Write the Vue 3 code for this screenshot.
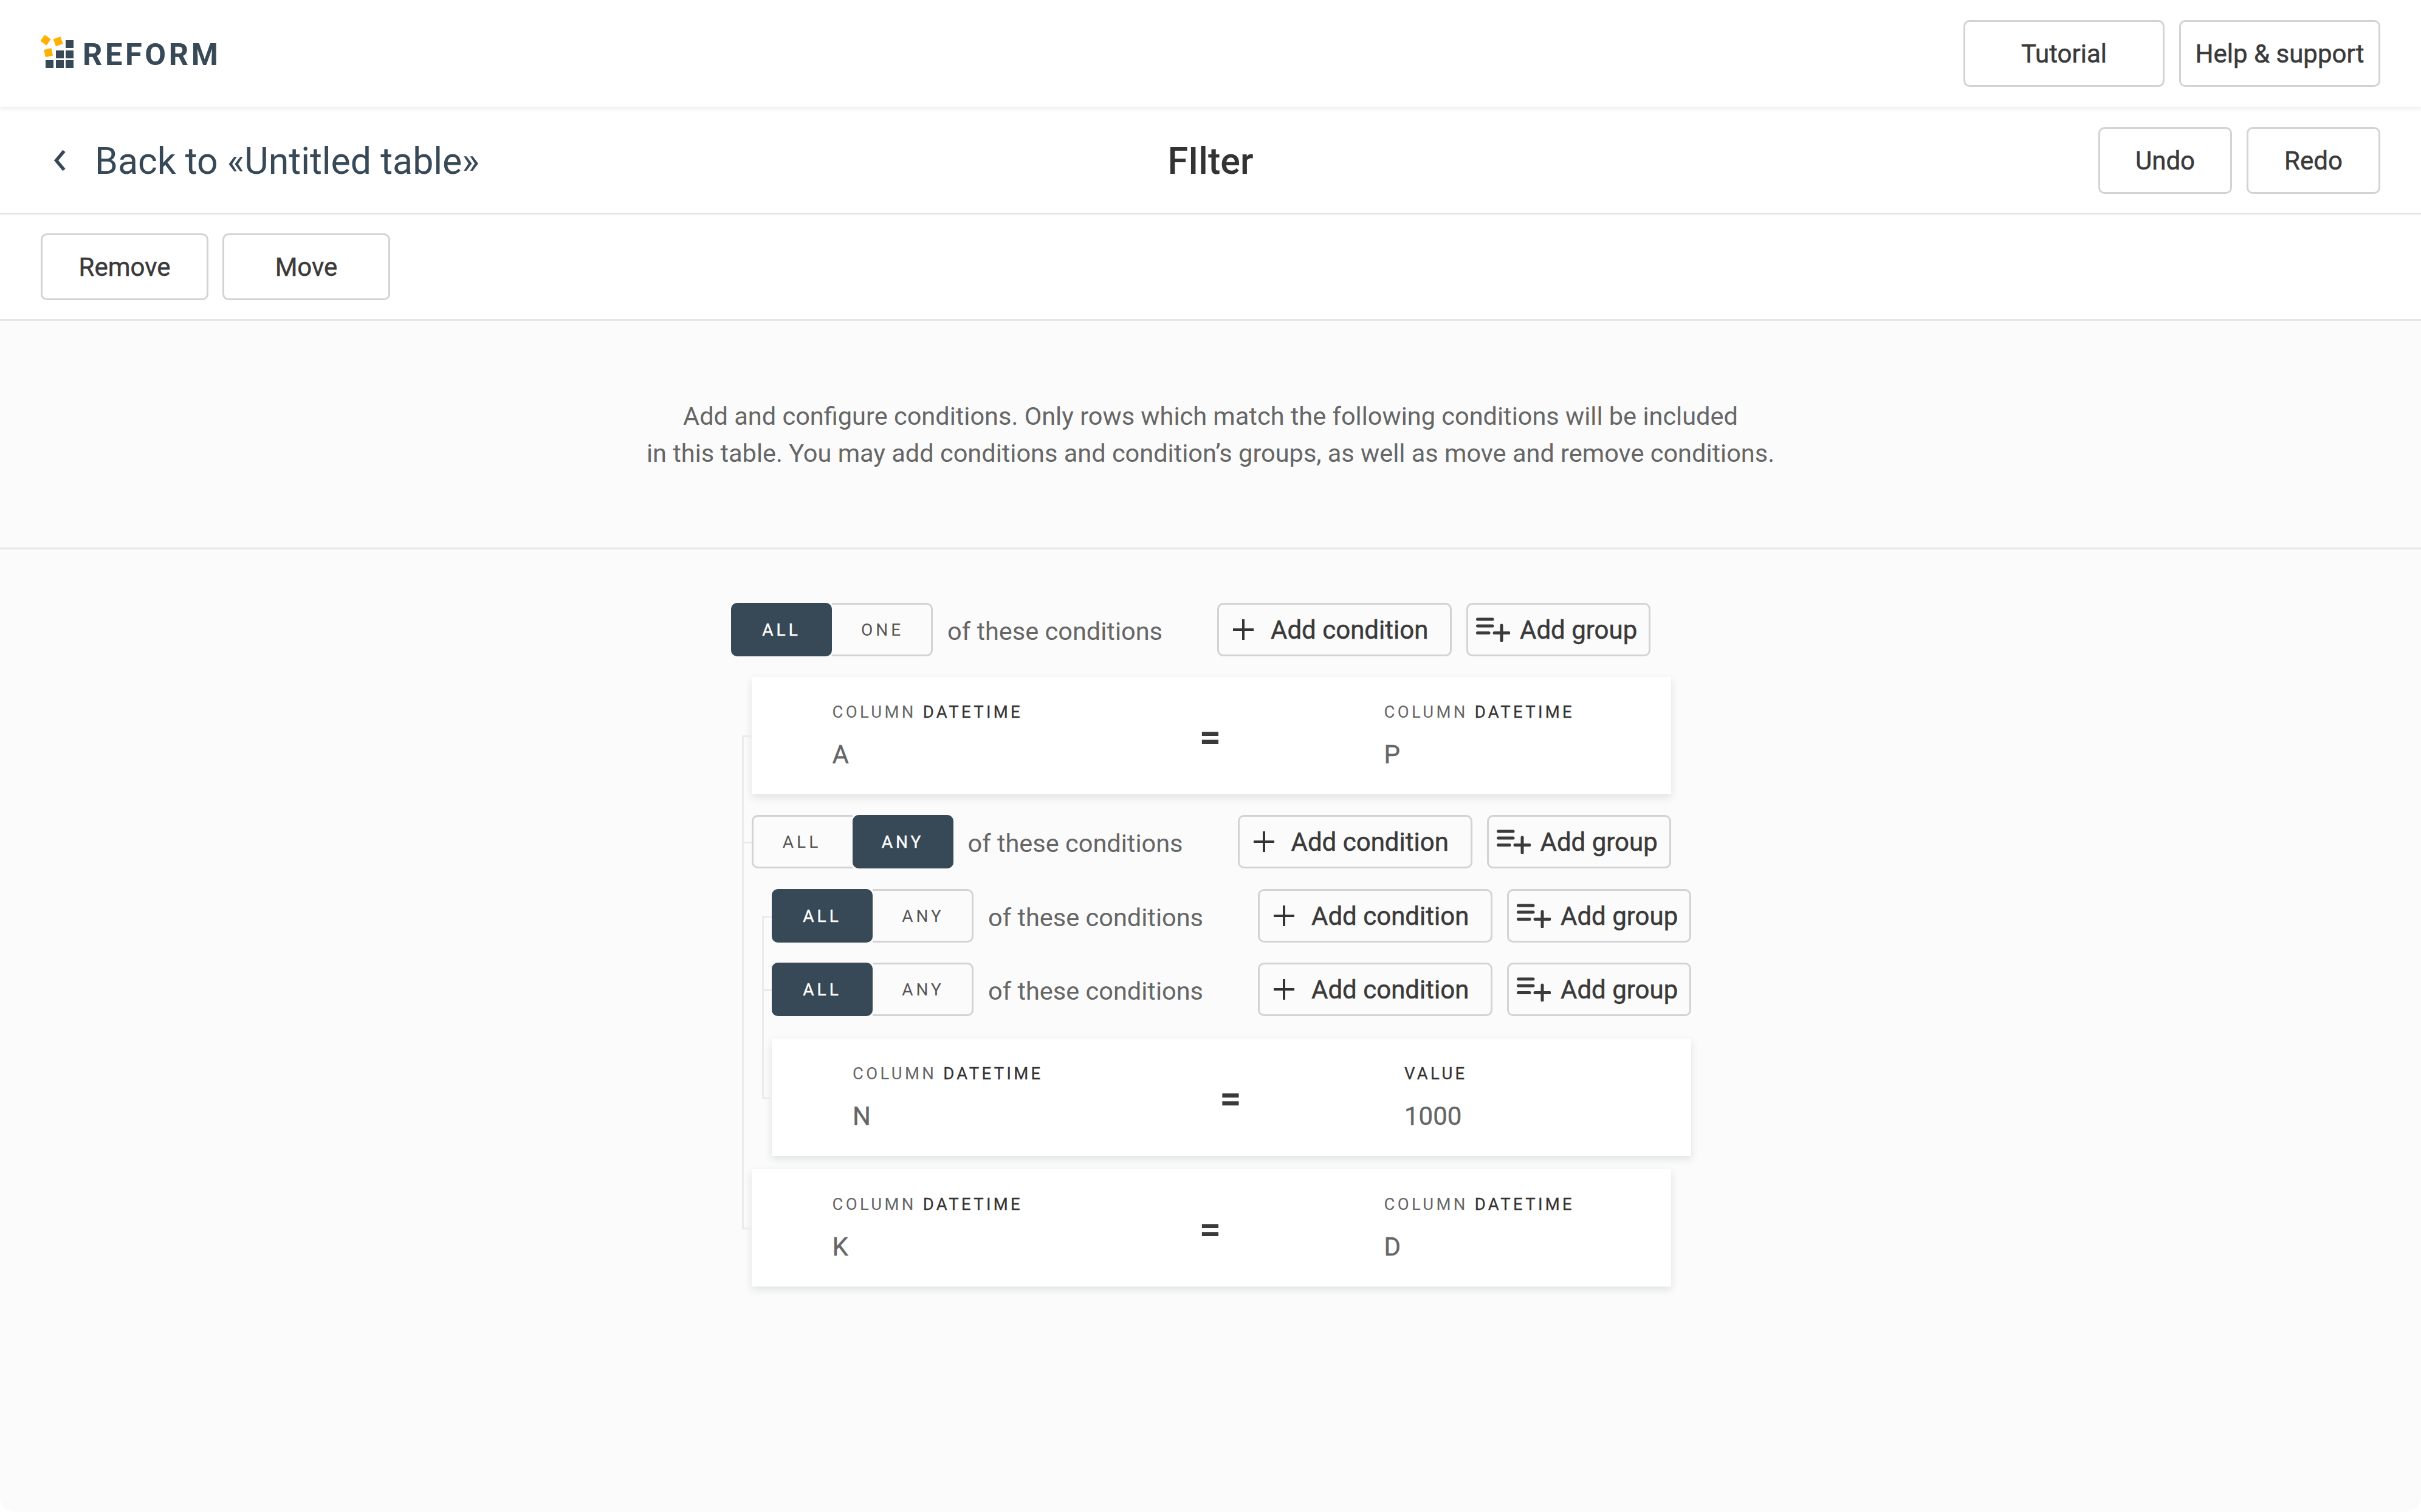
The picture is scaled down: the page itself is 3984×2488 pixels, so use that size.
<script setup>
const nestedRows = [0, 1]
</script>

<template>
  <div class="page">
    <header class="topbar">
      <div class="logo">
        <svg class="logo-mark" width="72" height="60" viewBox="0 0 72 60">
          <g fill="#ffb000">
            <rect x="1.75" y="1.75" width="12.5" height="12.5" transform="rotate(35 8 8)" />
            <rect x="22.45" y="4.05" width="12.5" height="12.5" transform="rotate(-20 28.7 10.3)" />
            <rect x="6.45" y="22.45" width="12.5" height="12.5" transform="rotate(-12 12.7 28.7)" />
          </g>
          <g fill="#374856">
            <rect x="41" y="8" width="13" height="13" />
            <rect x="25" y="25" width="13" height="13" />
            <rect x="41" y="25" width="13" height="13" />
            <rect x="8" y="41" width="13" height="13" />
            <rect x="25" y="41" width="13" height="13" />
            <rect x="41" y="41" width="13" height="13" />
          </g>
        </svg>
        <span class="logo-text">REFORM</span>
      </div>
      <div class="btn-row">
        <button class="btn w331">Tutorial</button>
        <button class="btn w331">Help &amp; support</button>
      </div>
    </header>

    <section class="titlebar">
      <div class="back">
        <svg class="chevron" width="20" height="34" viewBox="0 0 20 34">
          <path d="M17.5 1.5 L4.5 17 L17.5 32.5" fill="none" stroke="#374856" stroke-width="5.5" />
        </svg>
        <span>Back to «Untitled table»</span>
      </div>
      <h1 class="title">FIlter</h1>
      <div class="btn-row">
        <button class="btn w220">Undo</button>
        <button class="btn w220">Redo</button>
      </div>
    </section>

    <section class="toolbar">
      <button class="btn w276">Remove</button>
      <button class="btn w276">Move</button>
    </section>

    <section class="intro">
      <p>Add and configure conditions. Only rows which match the following conditions will be included</p>
      <p>in this table. You may add conditions and condition’s groups, as well as move and remove conditions.</p>
    </section>

    <main class="workspace">
      <div class="group root">
        <div class="head">
          <div class="toggle">
            <span class="opt on">ALL</span>
            <span class="opt">ONE</span>
          </div>
          <span class="of">of these conditions</span>
          <div class="actions">
            <button class="add cond">
              <svg width="34" height="34" viewBox="0 0 34 34"><path d="M17 0V34M0 17H34" stroke="#333" stroke-width="4" /></svg>
              Add condition
            </button>
            <button class="add grp">
              <svg width="56" height="40" viewBox="0 0 56 40"><path d="M2.5 3H27M2.5 14H27M2.5 25.5H21M30 25.5H54M42 13V38" stroke="#3a3a3a" stroke-width="5" stroke-linecap="round" fill="none" /></svg>
              Add group
            </button>
          </div>
        </div>

        <div class="children">
          <div class="card item">
            <div class="field"><div class="label">COLUMN <b>DATETIME</b></div><div class="value">A</div></div>
            <div class="eq">=</div>
            <div class="field far"><div class="label">COLUMN <b>DATETIME</b></div><div class="value">P</div></div>
          </div>

          <div class="group item">
            <div class="head">
              <div class="toggle">
                <span class="opt">ALL</span>
                <span class="opt on">ANY</span>
              </div>
              <span class="of">of these conditions</span>
              <div class="actions">
                <button class="add cond">
                  <svg width="34" height="34" viewBox="0 0 34 34"><path d="M17 0V34M0 17H34" stroke="#333" stroke-width="4" /></svg>
                  Add condition
                </button>
                <button class="add grp">
                  <svg width="56" height="40" viewBox="0 0 56 40"><path d="M2.5 3H27M2.5 14H27M2.5 25.5H21M30 25.5H54M42 13V38" stroke="#3a3a3a" stroke-width="5" stroke-linecap="round" fill="none" /></svg>
                  Add group
                </button>
              </div>
            </div>

            <div class="children nested">
              <div v-for="row in nestedRows" :key="row" class="group item">
                <div class="head">
                  <div class="toggle">
                    <span class="opt on">ALL</span>
                    <span class="opt">ANY</span>
                  </div>
                  <span class="of">of these conditions</span>
                  <div class="actions">
                    <button class="add cond">
                      <svg width="34" height="34" viewBox="0 0 34 34"><path d="M17 0V34M0 17H34" stroke="#333" stroke-width="4" /></svg>
                      Add condition
                    </button>
                    <button class="add grp">
                      <svg width="56" height="40" viewBox="0 0 56 40"><path d="M2.5 3H27M2.5 14H27M2.5 25.5H21M30 25.5H54M42 13V38" stroke="#3a3a3a" stroke-width="5" stroke-linecap="round" fill="none" /></svg>
                      Add group
                    </button>
                  </div>
                </div>
              </div>

              <div class="card item inner-card">
                <div class="field"><div class="label">COLUMN <b>DATETIME</b></div><div class="value">N</div></div>
                <div class="eq">=</div>
                <div class="field far"><div class="label"><b>VALUE</b></div><div class="value">1000</div></div>
              </div>
            </div>
          </div>

          <div class="card item last-card">
            <div class="field"><div class="label">COLUMN <b>DATETIME</b></div><div class="value">K</div></div>
            <div class="eq">=</div>
            <div class="field far"><div class="label">COLUMN <b>DATETIME</b></div><div class="value">D</div></div>
          </div>
        </div>
      </div>
    </main>
  </div>
</template>

<style>
html, body { margin: 0; background: #fff; }
</style>

<style scoped>
.page {
  width: 3984px;
  height: 2488px;
  overflow: hidden;
  display: flex;
  flex-direction: column;
  background: #fbfbfb;
  border-radius: 0 0 25px 25px;
  font-family: Roboto, "Liberation Sans", sans-serif;
  color: #333;
}
.topbar {
  position: relative;
  z-index: 2;
  flex: 0 0 176px;
  box-sizing: border-box;
  display: flex;
  align-items: center;
  justify-content: space-between;
  padding: 0 67px;
  background: #fff;
  box-shadow: 0 2px 7px rgba(55, 72, 86, 0.13);
}
.logo { display: flex; align-items: center; height: 60px; }
.logo-text {
  margin-left: -3px;
  padding-top: 3px;
  font-size: 50.5px;
  font-weight: 700;
  letter-spacing: 4.6px;
  color: #374856;
}
.btn-row { display: flex; gap: 24px; }
.btn {
  box-sizing: border-box;
  height: 110px;
  padding: 0;
  background: #fff;
  border: 3px solid #d3d3d5;
  border-radius: 10px;
  font: 400 42px Roboto, "Liberation Sans", sans-serif;
  -webkit-text-stroke: 0.5px #3a3a3a;
  color: #3a3a3a;
}
.w331 { width: 331px; }
.w220 { width: 220px; }
.w276 { width: 276px; }
.titlebar {
  flex: 0 0 177px;
  box-sizing: border-box;
  position: relative;
  display: flex;
  align-items: center;
  justify-content: space-between;
  padding: 2px 67px 0;
  background: #fff;
  border-bottom: 3px solid #e6e6e8;
}
.back {
  display: flex;
  align-items: center;
  font-size: 60.8px;
  color: #374856;
}
.back span { padding-top: 2px; }
.chevron { margin-left: 21px; margin-right: 48px; }
.title {
  position: absolute;
  left: 0;
  right: 0;
  margin: 0;
  padding-top: 2px;
  text-align: center;
  font-size: 61px;
  font-weight: 500;
  color: #333;
  pointer-events: none;
}
.toolbar {
  flex: 0 0 175px;
  box-sizing: border-box;
  display: flex;
  align-items: center;
  gap: 23px;
  padding: 0 67px;
  background: #fff;
  border-bottom: 3px solid #e6e6e8;
}
.intro {
  flex: 0 0 376px;
  box-sizing: border-box;
  display: flex;
  flex-direction: column;
  align-items: center;
  justify-content: center;
  border-bottom: 3px solid #e6e6e8;
  font-size: 41.5px;
  line-height: 61px;
  color: #666;
}
.intro p { margin: 0; }
.workspace { flex: 1; padding: 88px 0 0 1203px; }
.group { display: flex; flex-direction: column; gap: 34px; }
.head {
  width: 1513px;
  height: 88px;
  display: flex;
  align-items: center;
}
.toggle { flex: 0 0 332px; height: 88px; display: flex; }
.opt {
  flex: 1;
  box-sizing: border-box;
  display: flex;
  align-items: center;
  justify-content: center;
  border: 3px solid #d3d3d5;
  font-size: 28px;
  font-weight: 400;
  letter-spacing: 5px;
  color: #555;
}
.opt:first-child { border-right: 0; border-radius: 10px 0 0 10px; padding-right: 3px; }
.opt:last-child { border-left: 0; border-radius: 0 10px 10px 0; padding-left: 3px; }
.opt.on {
  background: #374856;
  border: 3px solid #374856;
  border-radius: 10px;
  padding: 0;
  color: #fff;
  -webkit-text-stroke: 0.4px #fff;
}
.of {
  margin-left: 24px;
  padding-top: 5px;
  font-size: 41.5px;
  color: #666;
}
.actions { margin-left: auto; display: flex; gap: 24px; }
.add {
  box-sizing: border-box;
  height: 88px;
  padding: 0;
  display: flex;
  align-items: center;
  background: transparent;
  border: 3px solid #d3d3d5;
  border-radius: 10px;
  font: 400 42px Roboto, "Liberation Sans", sans-serif;
  -webkit-text-stroke: 0.5px #3a3a3a;
  color: #3a3a3a;
}
.cond { width: 386px; padding-left: 23px; gap: 28px; }
.grp { width: 303px; padding-left: 13px; gap: 16px; }
.children {
  position: relative;
  margin-left: 33.5px;
  display: flex;
  flex-direction: column;
  gap: 34px;
}
.children::before {
  content: "";
  position: absolute;
  left: -16px;
  top: 97px;
  bottom: 96px;
  width: 3px;
  background: #eaebed;
}
.nested { gap: 33px; }
.nested::before { top: 44px; }
.item { position: relative; }
.item::before {
  content: "";
  position: absolute;
  left: -16px;
  top: 44px;
  width: 16px;
  height: 3px;
  background: #eaebed;
}
.card {
  box-sizing: border-box;
  width: 1513px;
  height: 193px;
  display: grid;
  grid-template-columns: 585px 74px 1fr;
  align-items: center;
  padding-left: 133px;
  background: #fff;
  box-shadow: 0 5px 12px rgba(55, 72, 86, 0.14);
}
.card.item::before { top: 96px; }
.inner-card { margin-top: 4px; }
.last-card { margin-top: -12px; }
.field { display: flex; flex-direction: column; }
.far { padding-left: 249px; }
.label {
  font-size: 27.5px;
  line-height: 32px;
  letter-spacing: 4.3px;
  color: #666;
}
.label b { font-weight: 400; color: #333; -webkit-text-stroke: 0.3px #333; }
.value {
  margin-top: 30px;
  font-size: 42px;
  line-height: 48px;
  -webkit-text-stroke: 0.4px #666;
  color: #666;
}
.eq {
  padding-top: 4px;
  text-align: center;
  font-size: 62px;
  line-height: 70px;
  font-weight: 700;
  color: #3a3a3a;
}
</style>
